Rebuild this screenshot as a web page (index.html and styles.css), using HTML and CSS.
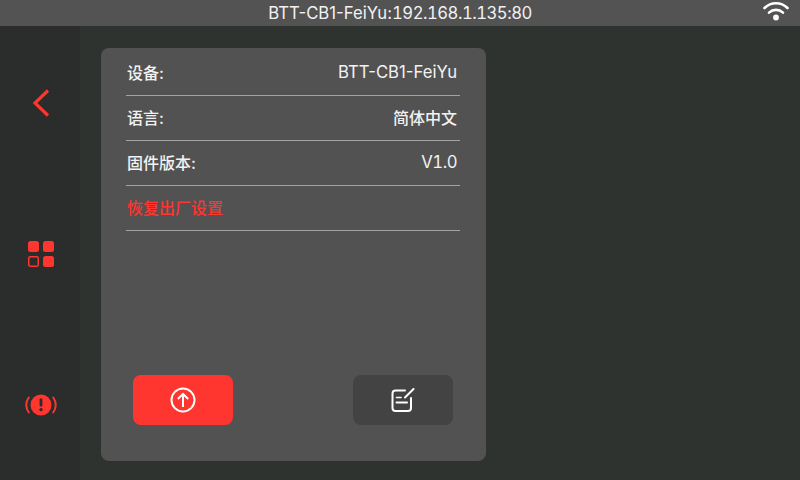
FILE: index.html
```html
<!DOCTYPE html>
<html lang="zh-CN">
<head>
    <meta charset="UTF-8">
    <title>BTT-CB1-FeiYu</title>
    <link rel="stylesheet" href="styles.css">
</head>
<body>

<header class="topbar">
    <span class="topbar-title">BTT-CB1-FeiYu:<span class="nums">192.168.1.135:80</span></span>
    <svg class="wifi-icon" width="26" height="22" viewBox="0 0 26 22" fill="none" stroke="#fff" stroke-linecap="round">
        <path d="M1.5 8C8 1.6 18 1.6 24.5 8" stroke-width="2.6"/>
        <path d="M6 12.6C10 9 16 9 20 12.6" stroke-width="2.6"/>
        <circle cx="13" cy="17.5" r="2.9" fill="#fff" stroke="none"/>
    </svg>
</header>

<div class="content">
    <nav class="sidebar">
        <button class="nav-item">
            <svg width="20" height="30" viewBox="0 0 20 30" fill="none" stroke="#ff3530" stroke-width="3.2">
                <path d="M17 2.5L4 15L17 27.5"/>
            </svg>
        </button>
        <button class="nav-item">
            <svg width="28" height="28" viewBox="0 0 28 28" fill="#ff3530">
                <rect x="1" y="1" width="11" height="11" rx="2.5"/>
                <rect x="16" y="1" width="11" height="11" rx="2.5"/>
                <rect x="1.75" y="16.75" width="9.5" height="9.5" rx="1.5" fill="none" stroke="#ff3530" stroke-width="1.5"/>
                <rect x="16" y="16" width="11" height="11" rx="2.5"/>
            </svg>
        </button>
        <button class="nav-item">
            <svg width="32" height="24" viewBox="0 0 32 24">
                <circle cx="16" cy="12" r="10.5" fill="#ff3530"/>
                <rect x="14.6" y="5.5" width="2.8" height="8" rx="1" fill="#2a2d2b"/>
                <circle cx="16" cy="16.6" r="1.7" fill="#2a2d2b"/>
                <path d="M3.8 4.5C0.4 8.8 0.4 15.2 3.8 19.5M28.2 4.5C31.6 8.8 31.6 15.2 28.2 19.5" fill="none" stroke="#ff3530" stroke-width="2" stroke-linecap="round"/>
            </svg>
        </button>
    </nav>

    <main class="card">
        <div class="rows">
            <div class="row"><span class="row-label">设备:</span><span>BTT-CB1-FeiYu</span></div>
            <div class="row"><span class="row-label">语言:</span><span class="row-label">简体中文</span></div>
            <div class="row"><span class="row-label">固件版本:</span><span class="nums">V1.0</span></div>
            <div class="row row-danger"><span class="row-label">恢复出厂设置</span></div>
        </div>
        <div class="actions">
            <button class="action-button action-update">
                <svg width="26" height="26" viewBox="0 0 26 26" fill="none" stroke="#fff" stroke-width="2">
                    <circle cx="13" cy="13" r="11.5"/>
                    <path d="M13 20V7M7.8 12L13 7L18.2 12"/>
                </svg>
            </button>
            <button class="action-button action-edit">
                <svg width="24" height="24" viewBox="0 0 24 24" fill="none" stroke="#fff" stroke-width="2" stroke-linecap="round">
                    <path d="M14 2.5H4.5Q1.5 2.5 1.5 5.5V20Q1.5 23 4.5 23H17Q20 23 20 20V10"/>
                    <path d="M14 9.5L22.5 1"/>
                    <path d="M5.5 9.5H10" stroke-width="1.6"/>
                    <path d="M5.5 14.5H16"/>
                </svg>
            </button>
        </div>
    </main>
</div>

</body>
</html>
```

FILE: styles.css
```css
body {
    font-family: 'Inter', 'Noto Sans CJK SC', sans-serif;
    margin: 0;
    width: 800px;
    height: 480px;
    overflow: hidden;
    display: flex;
    flex-direction: column;
    background: #2f3330;
    color: #f2f2f2;
}

button {
    border: none;
    padding: 0;
    background: none;
    display: flex;
    align-items: center;
    justify-content: center;
}

.nums {
    font-variant-numeric: tabular-nums;
    letter-spacing: -0.5px;
}

.topbar {
    height: 26px;
    flex: none;
    background: #535353;
    position: relative;
    display: flex;
    align-items: center;
    justify-content: center;
    font-size: 16.7px;
}

.wifi-icon {
    position: absolute;
    right: 11px;
    top: 0;
}

.content {
    flex: 1;
    display: flex;
    min-height: 0;
}

.sidebar {
    width: 80px;
    flex: none;
    background: #2a2d2b;
    display: flex;
    flex-direction: column;
    padding: 51px 0 0 1px;
    box-sizing: border-box;
}

.nav-item {
    width: 79px;
    height: 52px;
    flex: none;
    margin-bottom: 99px;
}

.card {
    width: 385px;
    height: 413px;
    margin: 22px 0 0 21px;
    box-sizing: border-box;
    background: #525252;
    border-radius: 8px;
    padding: 3px 26px 36px 25px;
    display: flex;
    flex-direction: column;
    justify-content: space-between;
}

.row {
    height: 45px;
    box-sizing: border-box;
    border-bottom: 1px solid #a3a3a3;
    display: flex;
    align-items: center;
    justify-content: space-between;
    padding: 0 3px 2px 1px;
    font-size: 16.7px;
}

.row-label {
    font-size: 16px;
    font-weight: 500;
}

.row-danger {
    color: #ff3530;
}

.actions {
    display: flex;
    justify-content: space-between;
    padding: 0 7px;
}

.action-button {
    width: 100px;
    height: 50px;
    border-radius: 8px;
}

.action-update {
    background: #ff3530;
}

.action-edit {
    background: #434343;
}
```
